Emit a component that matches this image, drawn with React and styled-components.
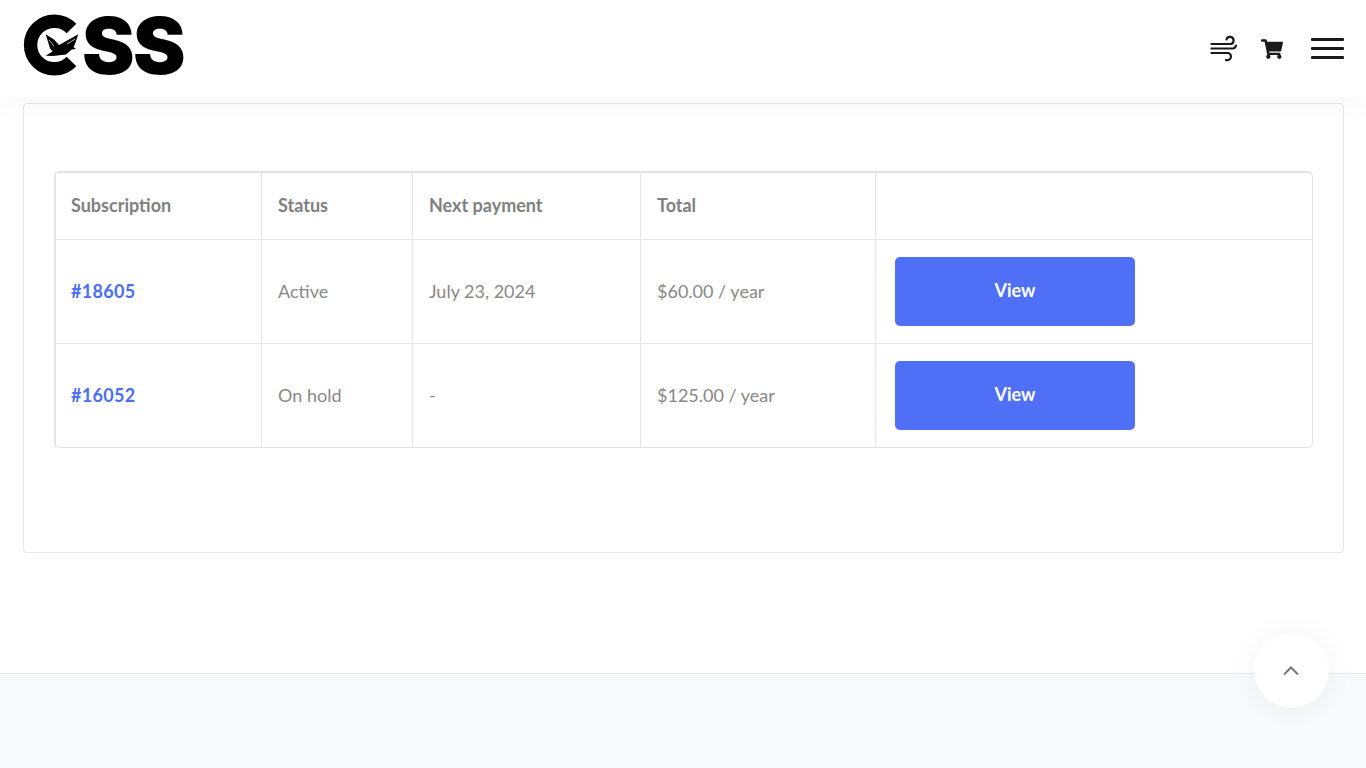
import styled, { createGlobalStyle } from 'styled-components';
import { FaShoppingCart } from 'react-icons/fa';

const GlobalStyle = createGlobalStyle`
  html, body {
    margin: 0;
    padding: 0;
    background: #fff;
    font-family: Lato, "Open Sans", sans-serif;
  }
  * { box-sizing: border-box; }
`;

const Page = styled.div`
  min-height: 100vh;
  display: flex;
  flex-direction: column;
`;

const Header = styled.header`
  position: relative;
  z-index: 1;
  height: 98px;
  flex: none;
  display: flex;
  align-items: center;
  justify-content: space-between;
  padding: 0 22px 8px 22px;
  background: #fff;
  box-shadow: 0 4px 30px rgba(0, 0, 0, 0.04);
`;

const Logo = styled.a`
  display: flex;
  align-items: center;
  color: #000;
`;

const LogoMark = styled.svg`
  width: 60px;
  height: 60px;
  flex: none;
  overflow: visible;
`;

const LogoText = styled.span`
  padding-right: 4px;
  font-family: Inter, sans-serif;
  font-weight: 900;
  font-size: 79px;
  line-height: 1;
  letter-spacing: -1.5px;
`;

const HeaderIcons = styled.div`
  display: flex;
  align-items: center;
  margin-top: 7px;
`;

const WindIcon = styled.svg`
  width: 27px;
  height: 27px;
  color: #1a1a1a;
`;

const Cart = styled(FaShoppingCart)`
  width: 22px;
  height: 20px;
  margin-left: 24px;
  color: #1a1a1a;
`;

const Burger = styled.button`
  display: flex;
  flex-direction: column;
  gap: 6px;
  width: 33px;
  margin-left: 28px;
  padding: 0;
  border: 0;
  background: none;
`;

const BurgerLine = styled.span`
  display: block;
  height: 3px;
  border-radius: 1px;
  background: #1a1a1a;
`;

const Main = styled.main`
  flex: none;
  padding: 5px 22px 120px 23px;
`;

const Card = styled.section`
  height: 450px;
  padding: 67px 30px 0;
  border: 1px solid #e6e6f2;
  border-radius: 4px;
`;

const Table = styled.table`
  width: 100%;
  table-layout: fixed;
  border-collapse: separate;
  border-spacing: 0;
  border: 1px solid #e2e2e2;
  border-radius: 6px;
  font-size: 18px;
  color: #777;
`;

const Th = styled.th`
  width: ${({ $width }) => ($width ? `${$width}px` : 'auto')};
  height: 67px;
  padding: 0 15px 2px 16px;
  border-top: 1px solid #e2e2e2;
  border-left: 1px solid #e4e4e4;
  text-align: left;
  font-weight: 700;
  color: #808080;

  &:first-child {
    padding-left: 15px;
  }
`;

const Td = styled.td`
  height: 104px;
  padding: 0 15px 2px 16px;
  border-top: 1px solid #e5e5e5;
  border-left: 1px solid #e5e5e5;
  color: #888;

  &:first-child {
    padding-left: 15px;
  }
`;

const ActionCell = styled(Td)`
  padding: 0 19px;
`;

const OrderLink = styled.a`
  font-weight: 700;
  letter-spacing: 0.3px;
  color: #4c6ef5;
`;

const ViewButton = styled.button`
  display: block;
  width: 240px;
  height: 69px;
  padding: 0 0 4px;
  border: 0;
  border-radius: 5px;
  background: #4f6ff6;
  color: #fff;
  font: 700 18px Lato, sans-serif;
`;

const Footer = styled.footer`
  flex: 1;
  min-height: 95px;
  border-top: 1px solid #e6e6f2;
  background: #f8f9fb;
`;

const ScrollTop = styled.button`
  position: fixed;
  top: 633px;
  right: 37px;
  z-index: 2;
  display: flex;
  align-items: center;
  justify-content: center;
  width: 75px;
  height: 75px;
  padding: 0;
  border: 0;
  border-radius: 50%;
  background: #fff;
  box-shadow: 0 0 30px rgba(0, 0, 0, 0.05);
`;

const Chevron = styled.svg`
  width: 16px;
  height: 9px;
  margin: -1px 1px 0 0;
  color: #777;
`;

const rows = [
  { id: '#18605', status: 'Active', next: 'July 23, 2024', total: '$60.00 / year' },
  { id: '#16052', status: 'On hold', next: '-', total: '$125.00 / year' },
];

const App = () => (
  <Page>
    <GlobalStyle />
    <Header>
      <Logo>
        <LogoMark viewBox="0 0 60 60">
          <path d="M49.5 13.5A23.8 23.8 0 1 0 49.5 46.5" fill="none" stroke="currentColor" strokeWidth="13.4" />
          <path
            d="M23.7 19.3 L32 24.5 L37 30 L43 26.7 L56.3 19.3 L53 29 L51.5 32 L54 34 L49.7 34.5 L44 39.5 L39.7 40 L31 41 L23.7 40.7 L30.5 36.5 L28 33.3 Z"
            fill="currentColor"
          />
          <path d="M27 25L32 31M45 29L53 24" fill="none" stroke="#fff" strokeWidth="0.7" />
        </LogoMark>
        <LogoText>SS</LogoText>
      </Logo>
      <HeaderIcons>
        <WindIcon viewBox="0 0 27 27" fill="none" stroke="currentColor" strokeWidth="2.2" strokeLinecap="round">
          <path d="M1.5 9H20.5a3.6 3.6 0 1 0-4-4.5" />
          <path d="M1.5 13.5H22.5c2 0 3-1 3.5-3" />
          <path d="M1.5 18H18.5a3.6 3.6 0 1 1-2.5 7" />
        </WindIcon>
        <Cart />
        <Burger aria-label="Menu">
          <BurgerLine />
          <BurgerLine />
          <BurgerLine />
        </Burger>
      </HeaderIcons>
    </Header>
    <Main>
      <Card>
        <Table>
          <thead>
            <tr>
              <Th $width={206}>Subscription</Th>
              <Th $width={151}>Status</Th>
              <Th $width={228}>Next payment</Th>
              <Th $width={235}>Total</Th>
              <Th />
            </tr>
          </thead>
          <tbody>
            {rows.map((row) => (
              <tr key={row.id}>
                <Td><OrderLink>{row.id}</OrderLink></Td>
                <Td>{row.status}</Td>
                <Td>{row.next}</Td>
                <Td>{row.total}</Td>
                <ActionCell><ViewButton>View</ViewButton></ActionCell>
              </tr>
            ))}
          </tbody>
        </Table>
      </Card>
    </Main>
    <Footer />
    <ScrollTop aria-label="Back to top">
      <Chevron viewBox="0 0 16 9" fill="none" stroke="currentColor" strokeWidth="2">
        <path d="M1 8.5L8 1.5L15 8.5" />
      </Chevron>
    </ScrollTop>
  </Page>
);

export default App;
